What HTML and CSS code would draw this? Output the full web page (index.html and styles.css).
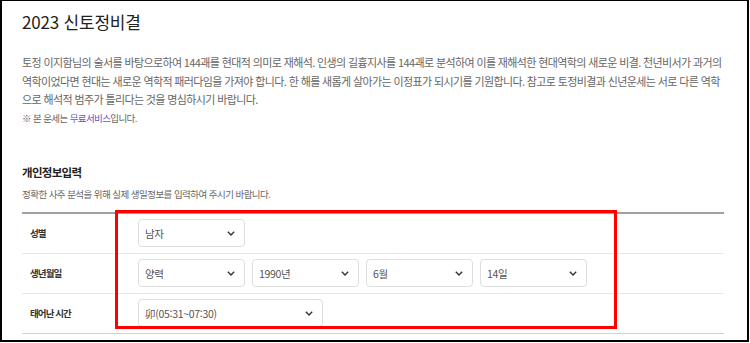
FILE: index.html
```html
<!DOCTYPE html>
<html lang="ko">
<head>
<meta charset="utf-8">
<title>2023 신토정비결</title>
<link rel="stylesheet" href="styles.css">
</head>
<body>
<div class="frame">
  <h1 class="title">2023 신토정비결</h1>
  <p class="intro">토정 이지함님의 술서를 바탕으로하여 144괘를 현대적 의미로 재해석. 인생의 길흉지사를 144괘로 분석하여 이를 재해석한 현대역학의 새로운 비결. 천년비서가 과거의 역학이었다면 현대는 새로운 역학적 패러다임을 가져야 합니다. 한 해를 새롭게 살아가는 이정표가 되시기를 기원합니다. 참고로 토정비결과 신년운세는 서로 다른 역학으로 해석적 범주가 틀리다는 것을 명심하시기 바랍니다.</p>
  <p class="note">※ 본 운세는 <span class="link">무료서비스</span>입니다.</p>

  <h2 class="section">개인정보입력</h2>
  <p class="sub">정확한 사주 분석을 위해 실제 생일정보를 입력하여 주시기 바랍니다.</p>

  <div class="form">
    <div class="row">
      <div class="label">성별</div>
      <div class="fields">
        <div class="select"><span>남자</span><svg class="chev" viewBox="0 0 8 5" width="8" height="5"><path d="M0.8 0.8 L4 4 L7.2 0.8" fill="none" stroke="#333" stroke-width="1.4"/></svg></div>
      </div>
    </div>
    <div class="row">
      <div class="label">생년월일</div>
      <div class="fields">
        <div class="select"><span>양력</span><svg class="chev" viewBox="0 0 8 5" width="8" height="5"><path d="M0.8 0.8 L4 4 L7.2 0.8" fill="none" stroke="#333" stroke-width="1.4"/></svg></div>
        <div class="select"><span>1990년</span><svg class="chev" viewBox="0 0 8 5" width="8" height="5"><path d="M0.8 0.8 L4 4 L7.2 0.8" fill="none" stroke="#333" stroke-width="1.4"/></svg></div>
        <div class="select"><span>6월</span><svg class="chev" viewBox="0 0 8 5" width="8" height="5"><path d="M0.8 0.8 L4 4 L7.2 0.8" fill="none" stroke="#333" stroke-width="1.4"/></svg></div>
        <div class="select"><span>14일</span><svg class="chev" viewBox="0 0 8 5" width="8" height="5"><path d="M0.8 0.8 L4 4 L7.2 0.8" fill="none" stroke="#333" stroke-width="1.4"/></svg></div>
      </div>
    </div>
    <div class="row">
      <div class="label">태어난 시간</div>
      <div class="fields">
        <div class="select wide"><span>卯(05:31~07:30)</span><svg class="chev" viewBox="0 0 8 5" width="8" height="5"><path d="M0.8 0.8 L4 4 L7.2 0.8" fill="none" stroke="#333" stroke-width="1.4"/></svg></div>
      </div>
    </div>
  </div>

  <div class="highlight"></div>
</div>
</body>
</html>
```

FILE: styles.css
```css
* { box-sizing: border-box; }

html, body {
  margin: 0;
  padding: 0;
  background: #fff;
}

body {
  font-family: "Noto Sans CJK KR", "Noto Sans", sans-serif;
  color: #333;
}

.frame {
  position: relative;
  width: 749px;
  height: 342px;
  border-top: 1px solid #000;
  border-left: 2px solid #000;
  border-right: 2px solid #000;
  border-bottom: 2px solid #000;
  padding: 9px 23px 0 20px;
  overflow: hidden;
}

.title {
  margin: 0;
  font-size: 17px;
  line-height: 24px;
  font-weight: 400;
  color: #222;
  letter-spacing: -0.2px;
}

.intro {
  margin: 19px 0 0;
  font-size: 11px;
  line-height: 18.5px;
  color: #666;
  letter-spacing: -0.62px;
}

.note {
  margin: 1px 0 0;
  font-size: 9.5px;
  line-height: 16px;
  color: #666;
  letter-spacing: -0.6px;
}

.link {
  color: #5b55d2;
}

.section {
  margin: 37px 0 0;
  font-size: 11.5px;
  line-height: 18px;
  font-weight: 700;
  color: #222;
  letter-spacing: -0.7px;
}

.sub {
  margin: 6px 0 0;
  font-size: 9.5px;
  line-height: 14px;
  color: #666;
  letter-spacing: -0.55px;
}

.form {
  margin-top: 11px;
  width: 702px;
  border-top: 2px solid #a0a0a0;
}

.row {
  display: flex;
  align-items: center;
  height: 40px;
  border-bottom: 1px solid #e8e8e8;
}

.row:last-child {
  border-bottom-color: #d0d0d0;
}

.label {
  width: 116px;
  padding-left: 8px;
  font-size: 9.5px;
  font-weight: 700;
  color: #333;
  letter-spacing: -0.9px;
}

.fields {
  display: flex;
  gap: 7px;
}

.select {
  display: flex;
  align-items: center;
  justify-content: space-between;
  width: 107px;
  height: 28px;
  padding: 0 9px 0 6px;
  border: 1px solid #dedede;
  border-radius: 4px;
  font-size: 10.5px;
  color: #555;
  background: #fff;
  letter-spacing: -0.3px;
}

.select.wide {
  width: 185px;
}

.chev {
  display: block;
}

.highlight {
  position: absolute;
  left: 113px;
  top: 209px;
  width: 502px;
  height: 119px;
  border: 3px solid #ff0000;
  pointer-events: none;
}
```
